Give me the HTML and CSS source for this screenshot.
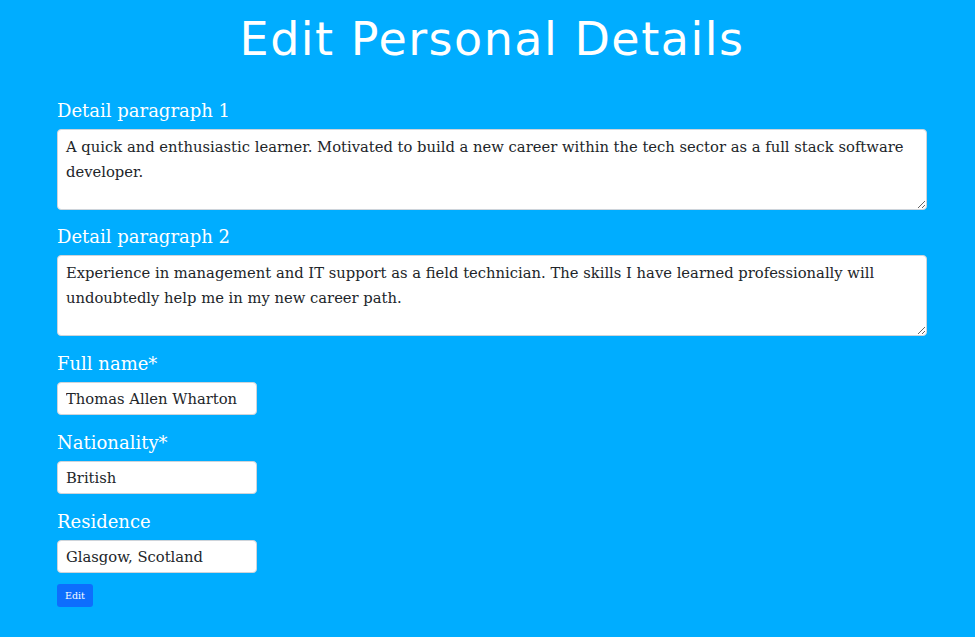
FILE: index.html
```html
<!DOCTYPE html>
<html lang="en">
<head>
<meta charset="utf-8">
<title>Edit Personal Details</title>
<link rel="stylesheet" href="styles.css">
</head>
<body>
<main class="page">
  <h1 class="title">Edit Personal Details</h1>
  <form class="form">
    <div class="field">
      <label class="label" for="p1">Detail paragraph 1</label>
      <textarea class="area" id="p1">A quick and enthusiastic learner. Motivated to build a new career within the tech sector as a full stack software developer.</textarea>
    </div>
    <div class="field">
      <label class="label label-tight" for="p2">Detail paragraph 2</label>
      <textarea class="area" id="p2">Experience in management and IT support as a field technician. The skills I have learned professionally will undoubtedly help me in my new career path.</textarea>
    </div>
    <div class="field">
      <label class="label" for="name">Full name*</label>
      <input class="input" id="name" type="text" value="Thomas Allen Wharton">
    </div>
    <div class="field">
      <label class="label" for="nat">Nationality*</label>
      <input class="input" id="nat" type="text" value="British">
    </div>
    <div class="field">
      <label class="label" for="res">Residence</label>
      <input class="input" id="res" type="text" value="Glasgow, Scotland">
    </div>
    <button class="btn" type="button">Edit</button>
  </form>
</main>
</body>
</html>
```
FILE: styles.css
```css
html, body {
  margin: 0;
  padding: 0;
  background: #00adff;
  height: 100%;
}
body {
  font-family: "DejaVu Serif", serif;
}
.page {
  padding: 0 48px 0 57px;
}
.title {
  margin: 0;
  padding-top: 9px;
  text-align: center;
  font-family: "DejaVu Sans", sans-serif;
  font-weight: 400;
  font-size: 46px;
  letter-spacing: 1.5px;
  line-height: 60px;
  color: #fff;
}
.form {
  display: flex;
  flex-direction: column;
  margin-top: 30px;
}
.field {
  display: flex;
  flex-direction: column;
  align-items: flex-start;
}
.label {
  color: #fff;
  font-size: 18px;
  line-height: 24px;
  margin: 0 0 6px;
}
.field + .field .label {
  margin-top: 16px;
}
.field + .field .label-tight {
  margin-top: 15px;
}
.area {
  box-sizing: border-box;
  width: 100%;
  height: 81px;
  border: 1px solid #ced4da;
  border-radius: 4px;
  padding: 4px 8px;
  font-family: "DejaVu Serif", serif;
  font-size: 14.75px;
  line-height: 25px;
  color: #212529;
  background: #fff;
  resize: vertical;
}
.input {
  box-sizing: border-box;
  width: 200px;
  height: 33px;
  border: 1px solid #ced4da;
  border-radius: 4px;
  padding: 0 8px;
  font-family: "DejaVu Serif", serif;
  font-size: 14.75px;
  color: #212529;
  background: #fff;
}
.btn {
  align-self: flex-start;
  margin-top: 11px;
  width: 36px;
  height: 23px;
  padding: 0;
  border: 0;
  border-radius: 3px;
  background: #0d6efd;
  color: #fff;
  font-family: "DejaVu Serif", serif;
  font-size: 9.5px;
}
```
